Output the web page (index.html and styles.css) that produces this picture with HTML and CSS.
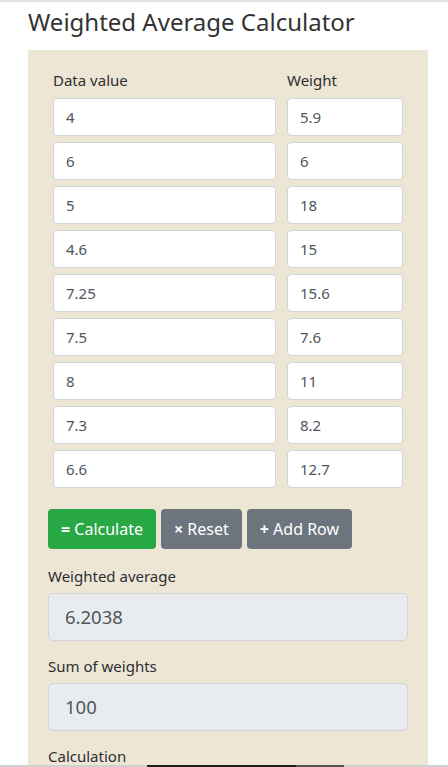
FILE: index.html
```html
<!DOCTYPE html>
<html lang="en">
<head>
    <meta charset="UTF-8">
    <title>Weighted Average Calculator</title>
    <link rel="stylesheet" href="styles.css">
</head>
<body>
    <div class="page">
        <h1>Weighted Average Calculator</h1>
        <div class="calcPanel">
            <div class="dataTable">
                <div class="colLabel">Data value</div>
                <div class="colLabel">Weight</div>
                <input class="cell" type="text" value="4"><input class="cell" type="text" value="5.9">
                <input class="cell" type="text" value="6"><input class="cell" type="text" value="6">
                <input class="cell" type="text" value="5"><input class="cell" type="text" value="18">
                <input class="cell" type="text" value="4.6"><input class="cell" type="text" value="15">
                <input class="cell" type="text" value="7.25"><input class="cell" type="text" value="15.6">
                <input class="cell" type="text" value="7.5"><input class="cell" type="text" value="7.6">
                <input class="cell" type="text" value="8"><input class="cell" type="text" value="11">
                <input class="cell" type="text" value="7.3"><input class="cell" type="text" value="8.2">
                <input class="cell" type="text" value="6.6"><input class="cell" type="text" value="12.7">
            </div>
            <div class="btnRow">
                <button class="btn btnGreen"><span class="btnIcon">=</span> Calculate</button>
                <button class="btn btnGray"><span class="btnIcon">&#215;</span> Reset</button>
                <button class="btn btnGray"><span class="btnIcon">+</span> Add Row</button>
            </div>
            <div class="resultLabel">Weighted average</div>
            <div class="resultBox">6.2038</div>
            <div class="resultLabel">Sum of weights</div>
            <div class="resultBox">100</div>
            <div class="resultLabel">Calculation</div>
        </div>
    </div>
    <div class="bottomBar"><span class="barDark"></span><span class="barMid"></span></div>
</body>
</html>
```

FILE: styles.css
```css
body {
    margin: 0;
    font-family: "Noto Sans", "Open Sans", sans-serif;
    color: #212529;
    background: #fff;
    border-top: 2px solid #e4e4e4;
    overflow: hidden;
}
.page {
    padding-left: 28px;
    width: 400px;
}
h1 {
    font-size: 24px;
    font-weight: normal;
    color: #333;
    line-height: 30px;
    margin: 5px 0 13px;
}
.calcPanel {
    background-color: #eee6d5;
    padding: 18px 20px 20px;
}
.dataTable {
    display: grid;
    grid-template-columns: 1fr 116px;
    column-gap: 11px;
    row-gap: 6px;
    padding: 0 5px;
}
.colLabel {
    font-size: 15px;
    line-height: 24px;
    color: #2b2f33;
}
.cell {
    box-sizing: border-box;
    height: 38px;
    width: 100%;
    border: 1px solid #ced4da;
    border-radius: 4px;
    background: #fff;
    padding: 0 12px;
    font-family: inherit;
    font-size: 15px;
    color: #50565c;
}
.btnRow {
    display: flex;
    gap: 5px;
    margin-top: 21px;
}
.btn {
    height: 40px;
    border: none;
    border-radius: 4px;
    color: #fff;
    font-family: inherit;
    font-size: 16px;
    padding: 0 13px;
}
.btnIcon {
    font-weight: bold;
}
.btnGreen {
    background-color: #28a745;
}
.btnGray {
    background-color: #6c757d;
}
.resultLabel {
    font-size: 15px;
    line-height: 24px;
    color: #2b2f33;
    margin-top: 13px;
    margin-bottom: 5px;
}
.btnRow + .resultLabel {
    margin-top: 15px;
}
.resultBox {
    box-sizing: border-box;
    height: 48px;
    border: 1px solid #ced4da;
    border-radius: 5px;
    background-color: #e9ecef;
    color: #50565c;
    font-size: 18.5px;
    line-height: 46px;
    padding: 0 16px;
}
.bottomBar {
    position: fixed;
    left: 0;
    right: 0;
    bottom: 0;
    height: 2px;
    background: #d0d0d0;
    display: flex;
    padding-left: 147px;
}
.barDark {
    width: 149px;
    background: #1e1e1e;
}
.barMid {
    width: 48px;
    background: #555;
}
```
